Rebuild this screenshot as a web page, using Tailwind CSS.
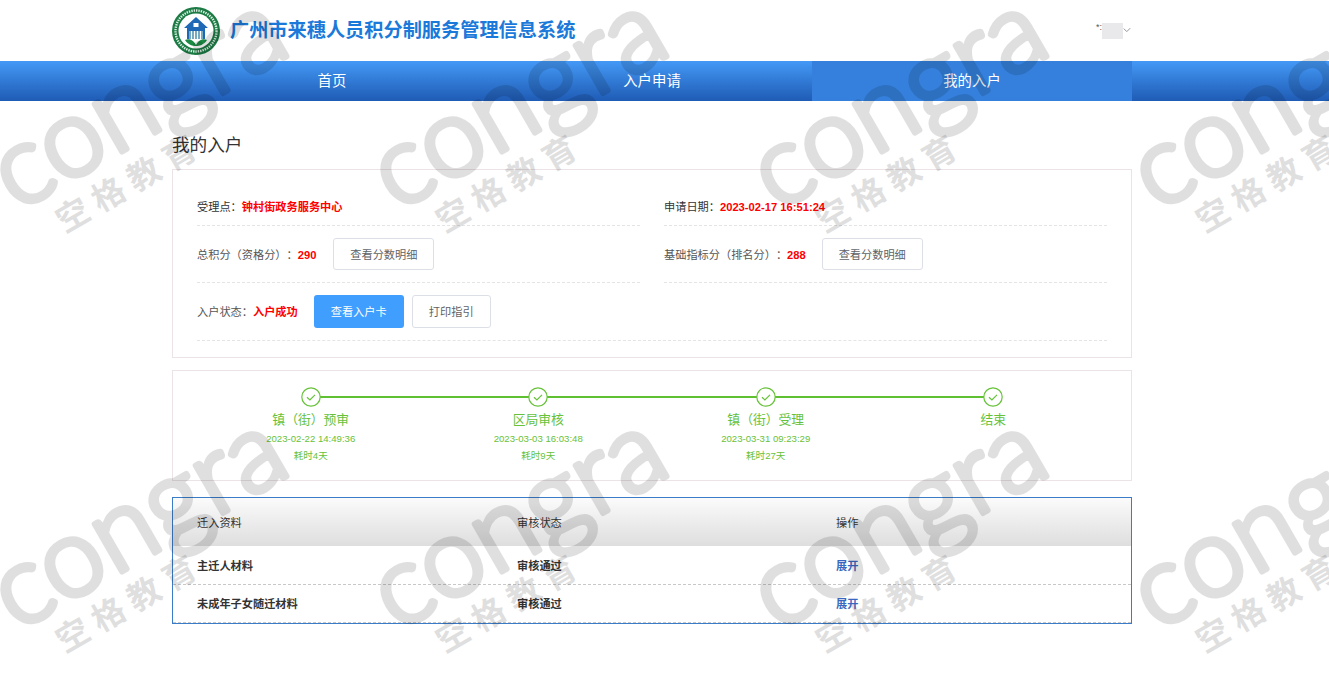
<!doctype html>
<html lang="zh">
<head>
<meta charset="utf-8">
<script src="https://cdn.jsdelivr.net/npm/@tailwindcss/browser@4"></script>
<title>我的入户</title>
</head>
<body class="relative h-[696px] overflow-hidden bg-white font-['Liberation_Sans','Noto_Sans_CJK_SC',sans-serif] text-[11.2px] text-[#333] [text-spacing-trim:space-all]">

<header class="ml-[172px] flex h-[61px] w-[960px] items-center justify-between">
  <div class="flex items-center gap-[10px]">
    <svg class="h-12 w-12 shrink-0" viewBox="0 0 48 48">
      <circle cx="24" cy="24" r="24" fill="#1c7a44"/>
      <circle cx="24" cy="24" r="20.5" fill="none" stroke="#d8efe0" stroke-width="2.4" stroke-dasharray="1.4 1"/>
      <circle cx="24" cy="24" r="17.5" fill="#fff"/>
      <path d="M24 10 L36 21 L33 21 L33 32 L15 32 L15 21 L12 21 Z" fill="#1f68b5"/>
      <rect x="17" y="24" width="14" height="8" fill="#fff"/>
      <path d="M18 24v8M21 24v8M24 24v8M27 24v8M30 24v8" stroke="#2f7f9f" stroke-width="1.3"/>
      <rect x="21.5" y="16" width="5" height="4" fill="#fff"/>
      <path d="M13 33 C18 31 22 34 24 38 C26 34 30 31 35 33 C32 38 27 39 24 39 C21 39 16 38 13 33Z" fill="#1c8a44"/>
    </svg>
    <h1 class="text-[19.2px] font-bold leading-none text-[#1a79d9]">广州市来穗人员积分制服务管理信息系统</h1>
  </div>
  <div class="mr-px flex h-4 items-center">
    <span class="mb-[6px] text-[9px] leading-none text-[#555]">*:</span>
    <span class="h-4 w-[21px] bg-[#e9e9eb]"></span>
    <svg class="mb-[2px] h-2 w-2" viewBox="0 0 8 8"><path d="M.8 2.6 3.8 5.6 7.2 2.2" fill="none" stroke="#909399" stroke-width="1"/></svg>
  </div>
</header>

<nav class="h-10 bg-gradient-to-b from-[#4499f6] to-[#1f5cb5]">
  <ul class="ml-[172px] grid h-full w-[960px] grid-cols-3 text-center text-[14.4px] leading-10 text-white">
    <li>首页</li>
    <li>入户申请</li>
    <li class="bg-[#3480dc]">我的入户</li>
  </ul>
</nav>

<main class="ml-[172px] w-[960px]">
  <h2 class="flex h-[68px] items-center pt-[21px] text-[17.6px] font-normal leading-none text-[#333]">我的入户</h2>

  <section class="border border-[#ebe3e6] px-6 pt-[17px] pb-4">
    <div class="grid grid-cols-2 gap-x-6">
      <div class="flex h-[39px] items-center border-b border-dashed border-[#e4e4e4] [&>b]:translate-y-px [&>span]:translate-y-px">
        <span>受理点：</span><b class="text-[#f00]">钟村街政务服务中心</b>
      </div>
      <div class="flex h-[39px] items-center border-b border-dashed border-[#e4e4e4] [&>b]:translate-y-px [&>span]:translate-y-px">
        <span>申请日期：</span><b class="text-[#f00]">2023-02-17 16:51:24</b>
      </div>
      <div class="flex h-[57px] items-center border-b border-dashed border-[#e4e4e4] [&>b]:translate-y-px [&>span]:translate-y-px">
        <span class="text-[#555]">总积分（资格分）：</span><b class="text-[#f00]">290</b>
        <button class="ml-[17px] h-8 w-[101px] rounded-[3px] border border-[#dcdfe6] bg-white pt-[2px] text-[#606266]">查看分数明细</button>
      </div>
      <div class="flex h-[57px] items-center border-b border-dashed border-[#e4e4e4] [&>b]:translate-y-px [&>span]:translate-y-px">
        <span class="text-[#555]">基础指标分（排名分）：</span><b class="text-[#f00]">288</b>
        <button class="ml-4 h-8 w-[101px] rounded-[3px] border border-[#dcdfe6] bg-white pt-[2px] text-[#606266]">查看分数明细</button>
      </div>
    </div>
    <div class="flex h-[58px] items-center border-b border-dashed border-[#e4e4e4] [&>b]:translate-y-px [&>span]:translate-y-px">
      <span class="text-[#555]">入户状态：</span><b class="text-[#f00]">入户成功</b>
      <button class="ml-4 h-[33px] w-[90px] rounded-[3px] bg-[#409eff] pt-[2px] text-white">查看入户卡</button>
      <button class="ml-2 h-[33px] w-[79px] rounded-[3px] border border-[#dcdfe6] bg-white pt-[2px] text-[#606266]">打印指引</button>
    </div>
  </section>

  <section class="mt-3 h-[111px] border border-[#ebe3e6] px-6 pt-4">
    <ol class="grid grid-cols-4 text-center text-[#67c23a]">
      <li class="relative flex flex-col items-center">
        <span class="absolute top-[9px] left-1/2 h-[2px] w-full bg-[#5fc032]"></span>
        <svg class="relative h-5 w-5" viewBox="0 0 20 20"><circle cx="10" cy="10" r="9.2" fill="#fff" stroke="#67c23a" stroke-width="1.2"/><path d="M6 10.2 8.9 13 14 7.8" fill="none" stroke="#67c23a" stroke-width="1.2"/></svg>
        <span class="mt-[5px] text-[12.8px] leading-[16px]">镇（街）预审</span>
        <span class="mt-1 text-[9.6px] leading-[14px]">2023-02-22 14:49:36</span>
        <span class="mt-[3px] text-[9.6px] leading-[14px]">耗时4天</span>
      </li>
      <li class="relative flex flex-col items-center">
        <span class="absolute top-[9px] left-1/2 h-[2px] w-full bg-[#5fc032]"></span>
        <svg class="relative h-5 w-5" viewBox="0 0 20 20"><circle cx="10" cy="10" r="9.2" fill="#fff" stroke="#67c23a" stroke-width="1.2"/><path d="M6 10.2 8.9 13 14 7.8" fill="none" stroke="#67c23a" stroke-width="1.2"/></svg>
        <span class="mt-[5px] text-[12.8px] leading-[16px]">区局审核</span>
        <span class="mt-1 text-[9.6px] leading-[14px]">2023-03-03 16:03:48</span>
        <span class="mt-[3px] text-[9.6px] leading-[14px]">耗时9天</span>
      </li>
      <li class="relative flex flex-col items-center">
        <span class="absolute top-[9px] left-1/2 h-[2px] w-full bg-[#5fc032]"></span>
        <svg class="relative h-5 w-5" viewBox="0 0 20 20"><circle cx="10" cy="10" r="9.2" fill="#fff" stroke="#67c23a" stroke-width="1.2"/><path d="M6 10.2 8.9 13 14 7.8" fill="none" stroke="#67c23a" stroke-width="1.2"/></svg>
        <span class="mt-[5px] text-[12.8px] leading-[16px]">镇（街）受理</span>
        <span class="mt-1 text-[9.6px] leading-[14px]">2023-03-31 09:23:29</span>
        <span class="mt-[3px] text-[9.6px] leading-[14px]">耗时27天</span>
      </li>
      <li class="relative flex flex-col items-center">
        <svg class="relative h-5 w-5" viewBox="0 0 20 20"><circle cx="10" cy="10" r="9.2" fill="#fff" stroke="#67c23a" stroke-width="1.2"/><path d="M6 10.2 8.9 13 14 7.8" fill="none" stroke="#67c23a" stroke-width="1.2"/></svg>
        <span class="mt-[5px] text-[12.8px] leading-[16px]">结束</span>
      </li>
    </ol>
  </section>

  <section class="mt-4 border border-[#3b7cc9]">
    <div class="grid h-12 grid-cols-[320px_319px_1fr] items-center bg-gradient-to-b from-[#fbfbfb] to-[#dedede] px-6 pt-[3px]">
      <span>迁入资料</span><span>审核状态</span><span>操作</span>
    </div>
    <div class="grid h-[39px] grid-cols-[320px_319px_1fr] items-center border-b border-dashed border-[#c8c8c8] px-6 pt-[2px] font-bold">
      <span>主迁人材料</span><span>审核通过</span><span class="text-[#3a68c0]">展开</span>
    </div>
    <div class="grid h-[38px] grid-cols-[320px_319px_1fr] items-center border-b border-dashed border-[#c8c8c8] px-6 pt-[2px] font-bold">
      <span>未成年子女随迁材料</span><span>审核通过</span><span class="text-[#3a68c0]">展开</span>
    </div>
  </section>
</main>

<div class="pointer-events-none absolute inset-0 grid grid-cols-[repeat(4,380px)] auto-rows-[420px] overflow-hidden">
  <div class="relative"><svg class="absolute top-0 left-0 h-[240px] w-[380px] overflow-visible opacity-[.12]" viewBox="0 0 380 240"><text x="17" y="212" transform="rotate(-30 17 212)" font-family="Lato" font-weight="300" font-size="110" stroke="black" stroke-width="6" stroke-linejoin="round">congra</text></svg><span class="absolute top-[161px] left-[45px] w-[170px] rotate-[-30deg] text-center text-[33px] font-bold leading-[44px] tracking-[8px] text-black opacity-[.12]">空格教育</span></div>
  <div class="relative"><svg class="absolute top-0 left-0 h-[240px] w-[380px] overflow-visible opacity-[.12]" viewBox="0 0 380 240"><text x="17" y="212" transform="rotate(-30 17 212)" font-family="Lato" font-weight="300" font-size="110" stroke="black" stroke-width="6" stroke-linejoin="round">congra</text></svg><span class="absolute top-[161px] left-[45px] w-[170px] rotate-[-30deg] text-center text-[33px] font-bold leading-[44px] tracking-[8px] text-black opacity-[.12]">空格教育</span></div>
  <div class="relative"><svg class="absolute top-0 left-0 h-[240px] w-[380px] overflow-visible opacity-[.12]" viewBox="0 0 380 240"><text x="17" y="212" transform="rotate(-30 17 212)" font-family="Lato" font-weight="300" font-size="110" stroke="black" stroke-width="6" stroke-linejoin="round">congra</text></svg><span class="absolute top-[161px] left-[45px] w-[170px] rotate-[-30deg] text-center text-[33px] font-bold leading-[44px] tracking-[8px] text-black opacity-[.12]">空格教育</span></div>
  <div class="relative"><svg class="absolute top-0 left-0 h-[240px] w-[380px] overflow-visible opacity-[.12]" viewBox="0 0 380 240"><text x="17" y="212" transform="rotate(-30 17 212)" font-family="Lato" font-weight="300" font-size="110" stroke="black" stroke-width="6" stroke-linejoin="round">congra</text></svg><span class="absolute top-[161px] left-[45px] w-[170px] rotate-[-30deg] text-center text-[33px] font-bold leading-[44px] tracking-[8px] text-black opacity-[.12]">空格教育</span></div>
  <div class="relative"><svg class="absolute top-0 left-0 h-[240px] w-[380px] overflow-visible opacity-[.12]" viewBox="0 0 380 240"><text x="17" y="212" transform="rotate(-30 17 212)" font-family="Lato" font-weight="300" font-size="110" stroke="black" stroke-width="6" stroke-linejoin="round">congra</text></svg><span class="absolute top-[161px] left-[45px] w-[170px] rotate-[-30deg] text-center text-[33px] font-bold leading-[44px] tracking-[8px] text-black opacity-[.12]">空格教育</span></div>
  <div class="relative"><svg class="absolute top-0 left-0 h-[240px] w-[380px] overflow-visible opacity-[.12]" viewBox="0 0 380 240"><text x="17" y="212" transform="rotate(-30 17 212)" font-family="Lato" font-weight="300" font-size="110" stroke="black" stroke-width="6" stroke-linejoin="round">congra</text></svg><span class="absolute top-[161px] left-[45px] w-[170px] rotate-[-30deg] text-center text-[33px] font-bold leading-[44px] tracking-[8px] text-black opacity-[.12]">空格教育</span></div>
  <div class="relative"><svg class="absolute top-0 left-0 h-[240px] w-[380px] overflow-visible opacity-[.12]" viewBox="0 0 380 240"><text x="17" y="212" transform="rotate(-30 17 212)" font-family="Lato" font-weight="300" font-size="110" stroke="black" stroke-width="6" stroke-linejoin="round">congra</text></svg><span class="absolute top-[161px] left-[45px] w-[170px] rotate-[-30deg] text-center text-[33px] font-bold leading-[44px] tracking-[8px] text-black opacity-[.12]">空格教育</span></div>
  <div class="relative"><svg class="absolute top-0 left-0 h-[240px] w-[380px] overflow-visible opacity-[.12]" viewBox="0 0 380 240"><text x="17" y="212" transform="rotate(-30 17 212)" font-family="Lato" font-weight="300" font-size="110" stroke="black" stroke-width="6" stroke-linejoin="round">congra</text></svg><span class="absolute top-[161px] left-[45px] w-[170px] rotate-[-30deg] text-center text-[33px] font-bold leading-[44px] tracking-[8px] text-black opacity-[.12]">空格教育</span></div>
</div>
</body>
</html>
